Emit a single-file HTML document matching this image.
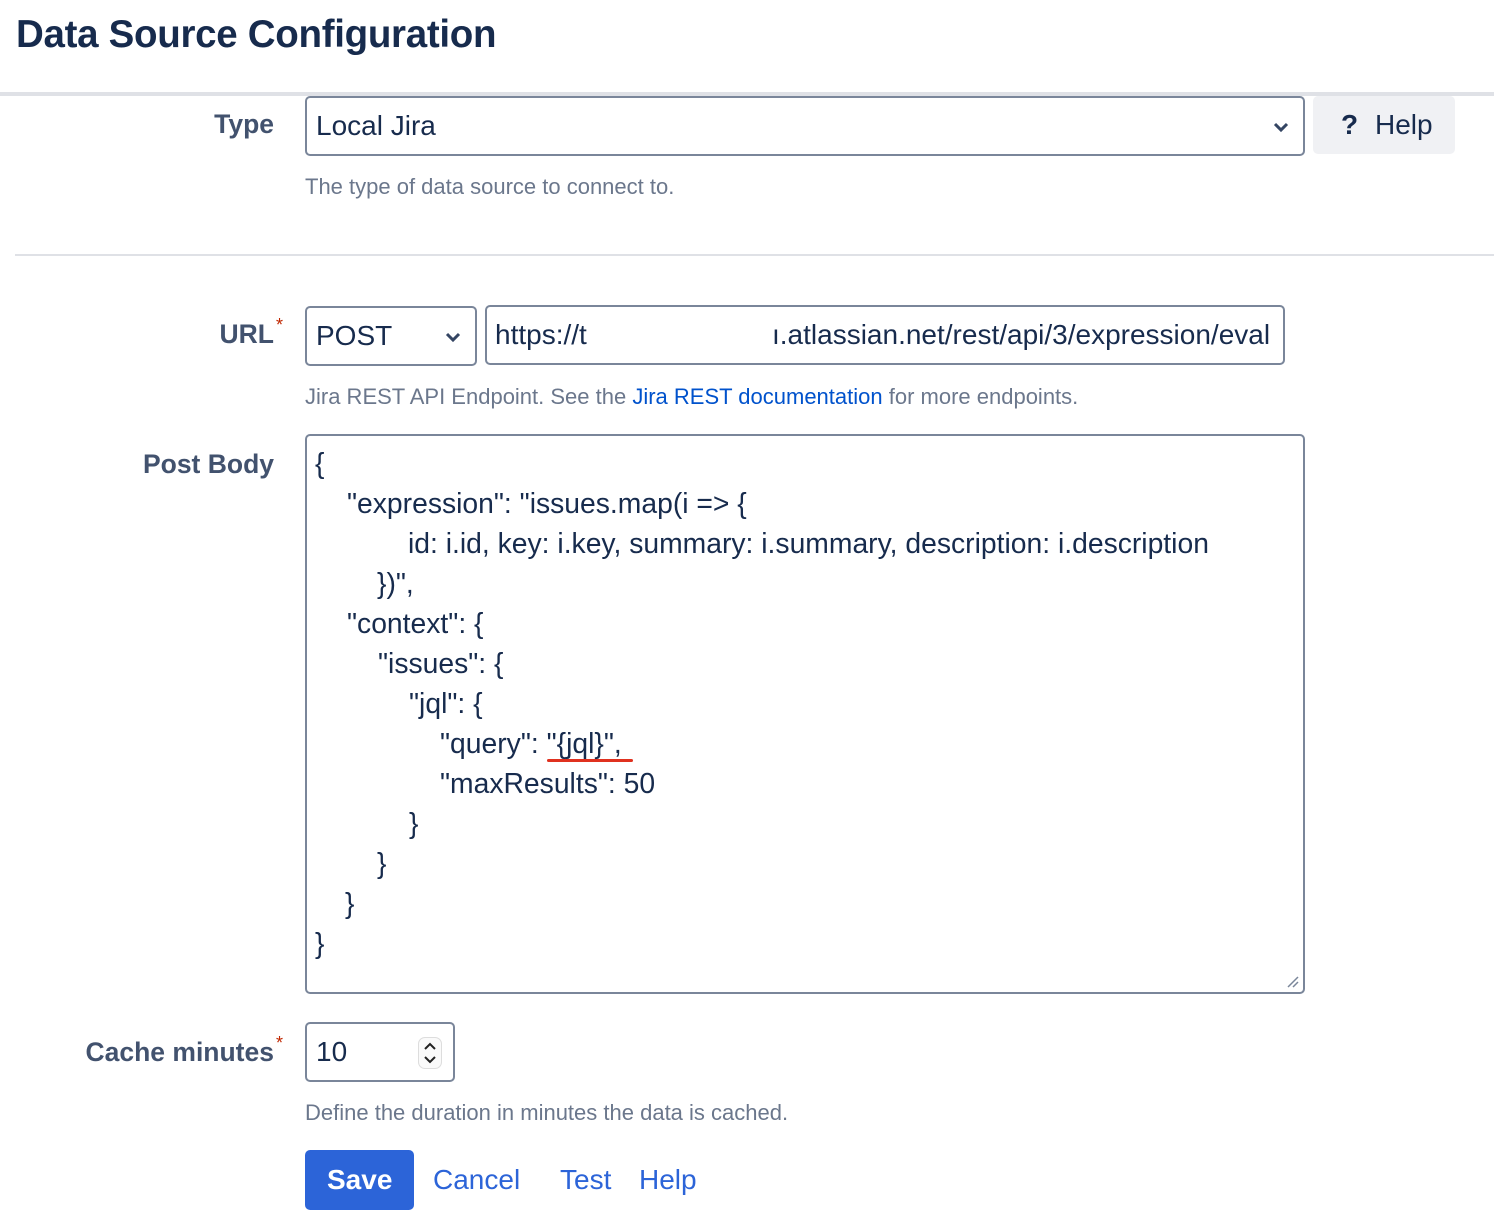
<!DOCTYPE html>
<html><head><meta charset="utf-8"><style>
*{box-sizing:border-box;margin:0;padding:0}
body{width:1494px;height:1192px;overflow:hidden;background:#fff;font-family:"Liberation Sans",Arial,sans-serif;position:relative;color:#172b4d}
.a{position:absolute;white-space:pre}
h1{position:absolute;left:16px;top:13px;font-size:38.5px;font-weight:bold;color:#172b4d;letter-spacing:-0.3px}
.lbl{position:absolute;font-size:26.5px;color:#42526e;text-align:right;right:1220px;white-space:nowrap;font-weight:bold}
.lbl b{position:absolute;left:100%;margin-left:2px;top:-4px;font-weight:normal;color:#bf2600;font-size:18px}
.box{position:absolute;border:2px solid #7a869a;border-radius:5px;background:#fff}
.txt{position:absolute;font-size:28px;color:#172b4d;white-space:pre}
.help{position:absolute;font-size:22px;color:#6b778c;white-space:nowrap}
.lnk{color:#0052cc}
.code div{position:absolute;font-size:28.3px;color:#172b4d;white-space:pre;height:40px;line-height:40px}
</style></head><body>
<h1>Data Source Configuration</h1>
<div style="position:absolute;left:0;top:92px;width:1494px;height:4px;background:#dfe1e6"></div>
<div class="lbl" style="top:109px">Type</div>
<div class="box" style="left:305px;top:96px;width:1000px;height:60px"></div>
<div class="txt" style="left:316px;top:110px">Local Jira</div>
<svg class="a" style="left:1272px;top:120px" width="18" height="14" viewBox="0 0 18 14"><path d="M3 4l6 6 6-6" fill="none" stroke="#344563" stroke-width="3"/></svg>
<div style="position:absolute;left:1313px;top:96px;width:142px;height:58px;background:#f0f1f4;border-radius:5px"></div>
<div class="txt" style="left:1341px;top:109px;font-weight:bold">?</div>
<div class="txt" style="left:1375px;top:109px">Help</div>
<div class="help" style="left:305px;top:174px">The type of data source to connect to.</div>
<div style="position:absolute;left:15px;top:254px;width:1479px;height:2px;background:#dfe1e6"></div>
<div class="lbl" style="top:319px">URL<b>*</b></div>
<div class="box" style="left:305px;top:306px;width:172px;height:60px"></div>
<div class="txt" style="left:316px;top:320px">POST</div>
<svg class="a" style="left:444px;top:330px" width="18" height="14" viewBox="0 0 18 14"><path d="M3 4l6 6 6-6" fill="none" stroke="#344563" stroke-width="3"/></svg>
<div class="box" style="left:485px;top:305px;width:800px;height:60px"></div>
<div class="txt" style="left:495px;top:319px">https://t</div>
<div class="txt" style="left:772px;top:319px">ı.atlassian.net/rest/api/3/expression/eval</div>
<div class="help" style="left:305px;top:384px">Jira REST API Endpoint. See the <span class="lnk">Jira REST documentation</span> for more endpoints.</div>
<div class="lbl" style="top:449px">Post Body</div>
<div class="box" style="left:305px;top:434px;width:1000px;height:560px"></div>
<svg class="a" style="left:1286px;top:975px" width="14" height="14"><path d="M2 12L12 2M7 12L12 7" stroke="#7a869a" stroke-width="1.5"/></svg>
<div class="code">
<div style="left:315px;top:443px">{</div>
<div style="left:347px;top:483px">"expression": "issues.map(i =&gt; {</div>
<div style="left:408px;top:523px">id: i.id, key: i.key, summary: i.summary, description: i.description</div>
<div style="left:377px;top:563px">})",</div>
<div style="left:347px;top:603px">"context": {</div>
<div style="left:378px;top:643px">"issues": {</div>
<div style="left:409px;top:683px">"jql": {</div>
<div style="left:440px;top:723px">"query": "{jql}",</div>
<div style="left:440px;top:763px">"maxResults": 50</div>
<div style="left:409px;top:803px">}</div>
<div style="left:377px;top:843px">}</div>
<div style="left:345px;top:883px">}</div>
<div style="left:315px;top:923px">}</div>
</div>
<div style="position:absolute;left:547px;top:759px;width:86px;height:3px;background:#e0311f;border-radius:2px"></div>
<div class="lbl" style="top:1037px">Cache minutes<b>*</b></div>
<div class="box" style="left:305px;top:1022px;width:150px;height:60px"></div>
<div class="txt" style="left:316px;top:1036px">10</div>
<div style="position:absolute;left:418px;top:1037px;width:24px;height:32px;border:1px solid #ddd;border-radius:7px;background:#fafafa"></div>
<svg class="a" style="left:420px;top:1039px" width="20" height="28"><path d="M5 10l5-5 5 5M5 18l5 5 5-5" fill="none" stroke="#222" stroke-width="2"/></svg>
<div class="help" style="left:305px;top:1100px">Define the duration in minutes the data is cached.</div>
<div style="position:absolute;left:305px;top:1150px;width:109px;height:60px;background:#2c64d8;border-radius:5px"></div>
<div class="txt" style="left:327px;top:1164px;color:#fff;font-weight:bold">Save</div>
<div class="txt" style="left:433px;top:1164px;color:#2c64d8">Cancel</div>
<div class="txt" style="left:560px;top:1164px;color:#2c64d8">Test</div>
<div class="txt" style="left:639px;top:1164px;color:#2c64d8">Help</div>
</body></html>
